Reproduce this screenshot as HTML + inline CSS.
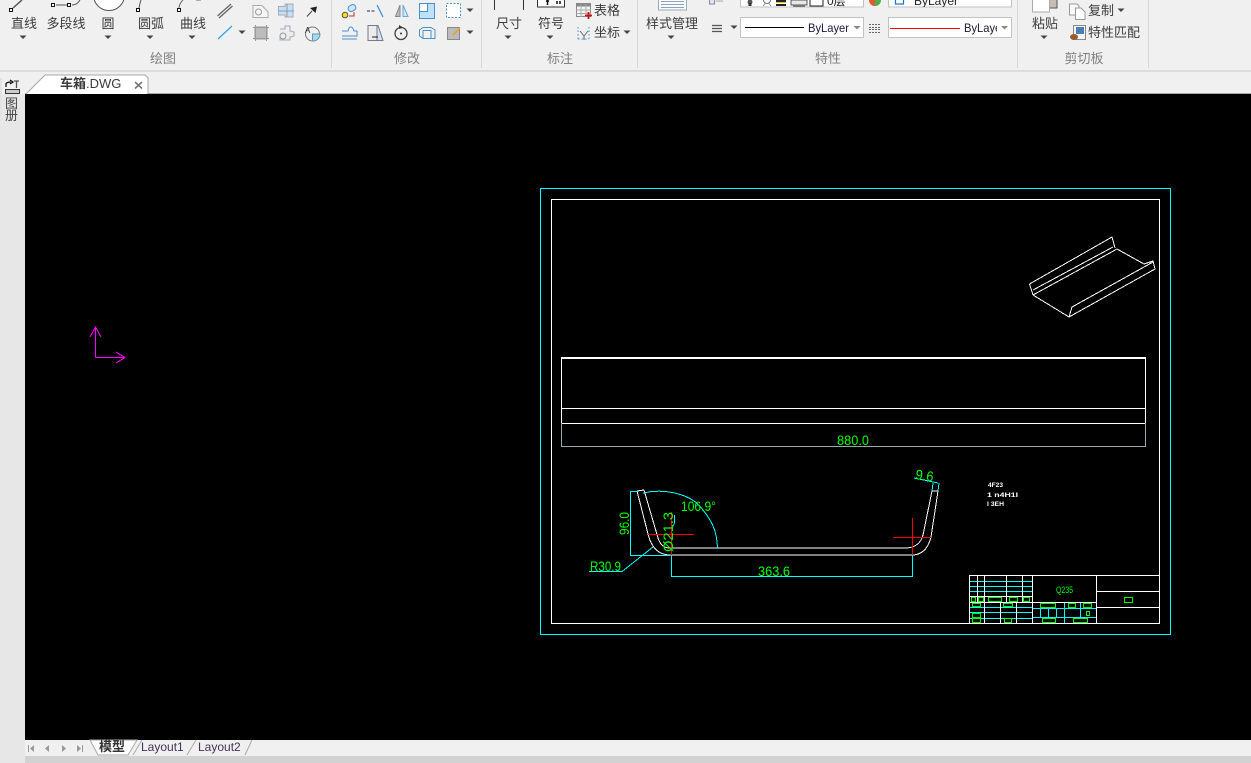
<!DOCTYPE html>
<html><head><meta charset="utf-8"><style>
html,body{margin:0;padding:0;background:#f0f0f0;overflow:hidden}
svg{display:block}
text{font-family:"Liberation Sans","Noto Sans CJK SC",sans-serif}
.t{font-size:13px;fill:#3c3c3c}
.m{text-anchor:middle}
.l{font-size:13px;fill:#808080;text-anchor:middle}
.g{font-size:14px;fill:#0f0;font-weight:400}
</style></head><body>
<svg width="1251" height="763" viewBox="0 0 1251 763" xmlns="http://www.w3.org/2000/svg">
<defs>
<clipPath id="c1"><rect x="889" y="18" width="108" height="18"/></clipPath>
<clipPath id="c2"><rect x="0" y="0" width="1251" height="7"/></clipPath>
<path id="a" d="M-3.5 -1.5H3.5L0 2Z" fill="#444"/>
</defs>
<rect width="1251" height="763" fill="#f0f0f0"/>
<rect y="70" width="1251" height="2" fill="#dcdcdc"/>
<rect y="94" width="25" height="669" fill="#e7e7e7"/>
<rect x="0" y="78" width="2" height="42" fill="#e3e3e3"/>
<g stroke="#d8d8d8" stroke-width="1"><path d="M331.5 0V68M481.5 0V68M637.5 0V68M1017.5 0V68M1148.5 0V68"/></g>

<!-- ribbon labels -->
<g>
<text class="t m" x="24" y="28">直线</text>
<text class="t m" x="66" y="28">多段线</text>
<text class="t m" x="108" y="28">圆</text>
<text class="t m" x="151" y="28">圆弧</text>
<text class="t m" x="193" y="28">曲线</text>
<text class="t m" x="509" y="28">尺寸</text>
<text class="t m" x="551" y="28">符号</text>
<text class="t" x="594" y="15">表格</text>
<text class="t" x="594" y="37">坐标</text>
<text class="t m" x="672" y="28">样式管理</text>
<text class="t m" x="1045" y="28">粘贴</text>
<text class="t" x="1088" y="15">复制</text>
<text class="t" x="1088" y="37">特性匹配</text>
</g>
<text class="l" x="163" y="63">绘图</text>
<text class="l" x="407" y="63">修改</text>
<text class="l" x="560" y="63">标注</text>
<text class="l" x="828" y="63">特性</text>
<text class="l" x="1084" y="63">剪切板</text>
<use href="#a" x="23" y="37"/><use href="#a" x="108" y="37"/><use href="#a" x="150" y="37"/><use href="#a" x="192" y="37"/>
<use href="#a" x="508" y="37"/><use href="#a" x="550" y="37"/><use href="#a" x="671" y="37"/><use href="#a" x="1044" y="37"/>
<use href="#a" x="242" y="32"/><use href="#a" x="470" y="10"/><use href="#a" x="470" y="32"/><use href="#a" x="627" y="32"/><use href="#a" x="734" y="27"/><use href="#a" x="1121" y="10"/>

<!-- draw icons -->
<g fill="none" stroke="#333">
<path d="M13 8L22 0" stroke="#555" stroke-width="1.5"/><rect x="9.5" y="8.5" width="3" height="3" fill="#fff" stroke="#111"/>
<path d="M56 5H67M72 5C76 5 78 3 80 0" stroke="#555"/><rect x="51.5" y="3.5" width="3" height="3" fill="#fff" stroke="#111"/><rect x="67.5" y="3.5" width="3" height="3" fill="#fff" stroke="#111"/>
<circle cx="109" cy="-5" r="15.5" fill="#fff" stroke="#555"/>
<path d="M139 8C139.5 5 140 3 141 0" stroke="#555"/><rect x="136.5" y="8.5" width="3" height="3" fill="#fff" stroke="#111"/>
<path d="M179 8C179 5 181 2 183 0M196 0H201" stroke="#666"/><rect x="177.5" y="8.5" width="3" height="3" fill="#fff" stroke="#111"/>
<path d="M217.5 16L231 4M219 18L232.5 6" stroke="#666" stroke-width="1.3"/>
<path d="M218 39L232 26" stroke="#2aa5e5" stroke-width="1.2"/>
<path d="M253 5.5H262L268 12V17.5H253Z" stroke="#aaa" fill="#f6f6f6"/><circle cx="258.5" cy="12" r="3" stroke="#999"/>
<path d="M278.5 6.5H285V4H293V17H285V15H278.500Z" stroke="#aab" fill="#c8dff0"/><path d="M278 11H294" stroke="#6aa8d8"/><path d="M287 4V17" stroke="#999"/>
<path d="M307 16.5L312 11" stroke="#444"/><path d="M310 8L317 6.5L315.5 13Z" fill="#222" stroke="none"/>
<rect x="255" y="27" width="12" height="12" fill="#bcbcbc" stroke="#999"/><path d="M253 27.5H269M253 38.5H269M255.5 25V41M266.5 25V41" stroke="#999"/>
<path d="M280 29H285V26H290V31L294 32V36L290 37V40H280V36" stroke="#aaa" fill="#e9eef3"/><circle cx="283" cy="36" r="3" stroke="#999"/>
<circle cx="312.5" cy="34" r="7" stroke="#777"/><path d="M312.5 34H320A7 7 0 0 1 312.5 41Z" fill="#a9d8f2" stroke="#69a"/><text x="305" y="33" font-size="8" fill="#222" stroke="none">A</text>
</g>

<!-- modify icons -->
<g fill="none">
<circle cx="345" cy="15" r="2.8" fill="#f5e012" stroke="#555"/><rect x="348" y="5" width="8" height="6" rx="3" transform="rotate(-30 352 8)" fill="#cfe6f7" stroke="#4a90c8"/><path d="M349 16H354V12" stroke="#b33"/>
<path d="M367 11H376" stroke="#456" stroke-dasharray="3 1.5" stroke-width="1.3"/><path d="M377 5L383 17" stroke="#3a8fd0" stroke-width="1.2"/>
<path d="M400 5L395.5 16.5H400Z" fill="#bbb" stroke="#888"/><path d="M403 5L408 16.5H403Z" fill="#cfe6f7" stroke="#6aa8d8"/>
<rect x="419.5" y="3.500" width="15" height="15" fill="#bfe2fb" stroke="#4a90c8"/><rect x="419.5" y="3.5" width="8" height="8" fill="#fff" stroke="#4a90c8"/>
<rect x="446.5" y="3.5" width="14" height="14" fill="#fff" stroke="#4a90c8" stroke-dasharray="2 1.5"/>
<path d="M342 36H357V31H354C352 25 349 26 348 31H342M342 39H357" stroke="#4a90c8"/>
<path d="M368 25.5H378L383 40.5H368Z" fill="#cfe6f7" stroke="#778"/><path d="M368 25.5H377V40.5H368Z" fill="#ececec" stroke="#778"/><path d="M372 37H378" stroke="#222"/>
<circle cx="401" cy="33.5" r="6" stroke="#444" stroke-width="1.3"/><circle cx="401" cy="33.5" r="1" fill="#333"/><path d="M399 25L403 27.5L399 29Z" fill="#333"/>
<path d="M419.5 30L423 27.5H431L435 30V38.5H423L419.5 36Z M423 30.5H431V38.5M423 30.5V38.5" stroke="#4a90c8"/>
<rect x="447.5" y="27.5" width="12" height="12" fill="#bbb" stroke="#888"/><path d="M453 35L460 28" stroke="#e8a13a" stroke-width="1.6"/>
</g>

<!-- annotate -->
<path d="M494.5 0V10M523.5 0V10" stroke="#333"/>
<rect x="537.5" y="-2" width="27" height="9" fill="#fff" stroke="#333"/><path d="M546 1H549M547.5 0V5M557 1V4M560 1V4" stroke="#111" stroke-width="1.5"/>
<rect x="576.5" y="3.5" width="14" height="13" fill="#f4f4f4" stroke="#888"/><rect x="576" y="3" width="15" height="3.5" fill="#888"/><path d="M576 10H591M576 13.5H591M581 4V17M586 4V17" stroke="#aaa"/><path d="M585 15.5H592M588.5 12V19" stroke="#c11" stroke-width="1.8"/>
<g fill="none" stroke="#4a90c8" stroke-dasharray="1.5 2"><path d="M578 27V40M589 27V40M578 39H589"/></g><path d="M580 31L584 36L588 31M584 36V40" stroke="#666" fill="none"/>

<!-- style -->
<rect x="658.5" y="-3" width="28" height="13" fill="#fafafa" stroke="#9ab"/><path d="M661 1.5H684M661 4.5H684M661 7.5H684" stroke="#8aa5c0"/>

<!-- properties -->
<rect x="709.5" y="-1" width="5" height="5" fill="#dfe8ef" stroke="#889"/><path d="M716 1H723" stroke="#aaa"/>
<path d="M712 25.5H722M712 28.5H722M712 31.5H722" stroke="#555" stroke-width="1.2"/>
<rect x="740.5" y="-3" width="123" height="10" fill="#fff" stroke="#c2c2c2"/>
<g clip-path="url(#c2)">
<circle cx="750" cy="2" r="2.5" fill="#555"/><rect x="748.5" y="3" width="3" height="3" fill="#333"/>
<circle cx="767" cy="0" r="3.5" fill="#fff" stroke="#777"/><path d="M763 6L765 3.5M771 6L769 3.5" stroke="#888"/>
<rect x="776" y="0" width="10" height="2" fill="#222"/><rect x="776" y="2" width="10" height="1" fill="#d8d000"/><rect x="776" y="4" width="10" height="2" fill="#222"/>
<rect x="791" y="0" width="16" height="5" fill="#e8e8e8" stroke="#555"/><rect x="793" y="5" width="12" height="2" fill="#777"/>
<rect x="810" y="-2" width="13" height="8" fill="#fff" stroke="#222"/>
<text x="827" y="5" font-size="12" fill="#222">0层</text>
</g>
<circle cx="875" cy="0" r="6" fill="#e0a020"/><path d="M875 0L881 0A6 6 0 0 1 875 6Z" fill="#4caf50"/><path d="M875 0V6A6 6 0 0 1 869 0Z" fill="#e05a30"/>
<rect x="888.5" y="-3" width="123" height="10" fill="#fff" stroke="#c2c2c2"/>
<rect x="895.5" y="-4" width="8" height="8" fill="#fff" stroke="#1874c8" stroke-width="1.2"/>
<g clip-path="url(#c2)"><text x="914" y="5" font-size="12" fill="#222">ByLayer</text></g>

<rect x="740.5" y="17.5" width="123" height="20" fill="#fff" stroke="#c2c2c2"/>
<path d="M745 27.5H804" stroke="#000"/>
<text x="808" y="32" font-size="12" fill="#1a1a3a" textLength="41" lengthAdjust="spacingAndGlyphs">ByLayer</text>
<path d="M853.5 26H860.5L857 29.5Z" fill="#888"/>
<path d="M869 24.5H881M869 27.5H881M869 29.5H881M869 32.5H881" stroke="#666" stroke-dasharray="2 1"/>
<rect x="888.5" y="17.5" width="123" height="20" fill="#fff" stroke="#c2c2c2"/>
<path d="M890 28.5H960" stroke="#f00"/>
<g clip-path="url(#c1)"><text x="964" y="32" font-size="12" fill="#1a1a3a" textLength="41" lengthAdjust="spacingAndGlyphs">ByLayer</text></g>
<path d="M1001 26H1008L1004.5 29.5Z" fill="#888"/>

<!-- clipboard -->
<rect x="1048" y="-2" width="9" height="10" fill="#c4bdb4" stroke="#555"/>
<rect x="1032.5" y="-3" width="17" height="15" fill="#fff" stroke="#aaa"/>
<path d="M1069.5 4H1077L1079 6V15H1069.5Z" fill="#fafafa" stroke="#999"/><path d="M1075.5 8H1081L1085 12V19.5H1075.5Z" fill="#fff" stroke="#999"/>
<rect x="1073.5" y="25.5" width="12" height="14" fill="#f4f4f4" stroke="#888"/><rect x="1076" y="27" width="8" height="7" fill="#4a7fb5"/><ellipse cx="1074" cy="37" rx="4" ry="3" fill="#9a5a2a"/>

<!-- doc tab -->
<rect x="25" y="93" width="1226" height="1" fill="#a8a8a8"/>
<path d="M26 94L45 75H145L148 78V94Z" fill="#fff" stroke="#a8a8a8"/>
<rect x="27" y="93" width="120" height="2" fill="#fff"/>
<text x="60" y="88" font-size="13" font-weight="700" fill="#3c3c3c">车箱<tspan font-weight="400">.DWG</tspan></text>
<path d="M135 82L142 88.5M142 82L135 88.5" stroke="#777" stroke-width="1.6"/>
<!-- side -->
<path d="M6 87V84C6 83 8 82 11 82M10 80L13 82L10 84" fill="none" stroke="#111" stroke-width="1.3"/><path d="M14 81H19M16.5 81V88" stroke="#555" stroke-width="1.3"/>
<rect x="5.5" y="89.5" width="14" height="4" fill="#ccc" stroke="#333"/>
<text x="5" y="108" font-size="13" fill="#444">图</text><text x="5" y="120" font-size="13" fill="#444">册</text>

<!-- canvas -->
<rect x="25" y="94" width="1226" height="646" fill="#000"/>

<g shape-rendering="crispEdges">
<!-- UCS -->
<path d="M95.5 357.5V327M90 337L95.5 327L101 337M95.5 357.5H125M116 352L125 357.5L116 363" fill="none" stroke="#f0f"/>

<!-- frames -->
<rect x="540.5" y="188.5" width="630" height="446" fill="none" stroke="#0ff"/>
<rect x="551.5" y="199.5" width="608" height="424" fill="none" stroke="#fff"/>

<!-- front view -->
<rect x="561" y="357" width="585" height="2" fill="#fff"/>
<g stroke="#fff" fill="none"><path d="M561.5 358V423M1145.5 358V423M561 408.5H1145M561 423.5H1145"/></g>
<path d="M561.5 423V447M1145.5 423V447M561 446.5H1145" stroke="#9aa" fill="none"/>

<!-- section -->
<g fill="none" stroke="#fff">
<path d="M644 490L658 538C660 544 663 548 670 548H905C915 548 921 543 923 535L932 491"/>
<path d="M637 491L648 534C651 546 657 555 670 555H912C922 555 928 549 931 537L938 491"/>
<path d="M637 491L644 490M932 491H938"/>
</g>
<g fill="none" stroke="#0ff">
<path d="M643 493C665 488 692 494 703 510C711 520 717 530 717.5 548"/>
<path d="M638 491.5H630.5V555.5H670"/>
<path d="M653 547L622 571.5H589"/>
<path d="M671.5 555V576.5H912.5V555"/>
<path d="M674.5 515V523L672 528"/>
<path d="M914 478L938 483M933 483L932 491M939 483L938 491"/>
</g>
<g stroke="#f00" fill="none"><path d="M648 534.5H694M671.5 512V555M893 537.5H931M912.5 518V555"/></g>

<!-- iso -->
<g fill="none" stroke="#fff">
<path d="M1029.5 284L1112 237L1115 248M1029.5 284L1033 295M1033 290L1113 247M1033 295L1117 249L1144 264L1153 261L1155 269L1069 317L1033 295M1069 317L1072 307L1153 262"/>
</g>

<!-- title block -->
<g fill="none" stroke="#0ff">
<path d="M969 581.5H1032M969 586.5H1032M969 591.5H1032M969 607.5H1032M969 612.5H1032M969 618.5H1032"/>
<path d="M1032 608.5H1096M1032 617.5H1096M1040.5 608V617M1048.5 608V617M1056.5 608V617M1064.5 602V623M1080.5 602V617"/>
</g>
<g fill="none" stroke="#fff">
<path d="M969.5 575.5H1159M969.5 575V623M977.5 575V602M984.5 575V623M1006.5 575V602M1022.5 575V602M1032.5 575V623M1096.5 575V623"/>
<path d="M969 596.5H1032M969 602.5H1096M1096 591.5H1159M1096 607.5H1159M1000.5 602V623M1016.5 602V623"/>
</g>
<g fill="none" stroke="#0f0">
<rect x="971.5" y="597.5" width="4" height="4"/><rect x="978.5" y="597.5" width="5" height="4"/><rect x="988.5" y="597.5" width="13" height="4"/><rect x="1009.5" y="597.5" width="8" height="4"/><rect x="1023.5" y="597.5" width="6" height="4"/>
<rect x="972.5" y="603.5" width="8" height="3"/><rect x="1003.5" y="603.5" width="9" height="3"/>
<rect x="972.5" y="613.5" width="8" height="4"/><rect x="972.5" y="618.5" width="8" height="4"/><rect x="1004.5" y="618.5" width="7" height="4"/>
<rect x="1040.5" y="603.5" width="15" height="4"/><rect x="1068.5" y="603.5" width="7" height="4"/><rect x="1083.5" y="603.5" width="8" height="4"/><rect x="1086.5" y="611.5" width="3" height="4"/>
<rect x="1042.5" y="618.5" width="13" height="4"/><rect x="1073.5" y="618.5" width="14" height="4"/>
<rect x="1124.5" y="597.5" width="8" height="5"/>
</g>
</g>

<!-- drawing text -->
<text class="g m" x="853" y="445" textLength="32" lengthAdjust="spacingAndGlyphs">880.0</text>
<text class="g" transform="translate(629 535) rotate(-90)" textLength="23" lengthAdjust="spacingAndGlyphs">96.0</text>
<text class="g" transform="translate(673 552) rotate(-90)" textLength="40" lengthAdjust="spacingAndGlyphs">Ø21.3</text>
<text class="g" x="590" y="571" textLength="31" lengthAdjust="spacingAndGlyphs">R30.9</text>
<text class="g" x="681" y="511" textLength="35" lengthAdjust="spacingAndGlyphs">106.9°</text>
<text class="g" x="758" y="576" textLength="32" lengthAdjust="spacingAndGlyphs">363.6</text>
<text class="g" transform="translate(915 479) rotate(8)" textLength="18" lengthAdjust="spacingAndGlyphs">9.6</text>
<text x="1056" y="593" font-size="9" fill="#0f0" textLength="17" lengthAdjust="spacingAndGlyphs">Q235</text>
<g fill="#fff" font-weight="700" font-size="6"><text x="988" y="487" textLength="15" lengthAdjust="spacingAndGlyphs">4F23</text><text x="987" y="497" textLength="31" lengthAdjust="spacingAndGlyphs">1 n4H1I</text><text x="987" y="506" textLength="17" lengthAdjust="spacingAndGlyphs">I 3EH</text></g>

<!-- bottom -->
<rect x="25" y="740" width="1226" height="16" fill="#f0f0f0"/>
<rect x="25" y="756" width="1226" height="7" fill="#d2d2d2"/>
<g fill="#999"><path d="M28 745H29V752H28ZM34 745V752L30 748.5Z"/><path d="M49 745V752L45 748.5Z"/><path d="M62 745V752L66 748.5Z"/><path d="M77 745V752L81 748.5ZM82 745H83V752H82Z"/></g>
<path d="M90 740L98 755H128L137 740Z" fill="#fff" stroke="#aaa"/>
<path d="M133 755L142 740M187 755L196 740M245 755L252 740" stroke="#aaa" fill="none"/>
<text x="99" y="751" font-size="13" font-weight="700" fill="#333">模型</text>
<text x="141" y="751" font-size="12" fill="#443355">Layout1</text>
<text x="198" y="751" font-size="12" fill="#443355">Layout2</text>
</svg>
</body></html>
